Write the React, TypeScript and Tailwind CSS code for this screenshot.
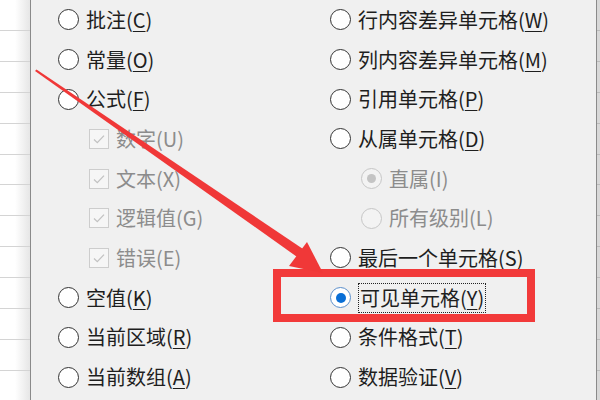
import React from "react";

type Item = {
  label: string;
  key: string;
  kind: "radio" | "check" | "subradio";
  disabled?: boolean;
  checked?: boolean;
  focus?: boolean;
};

const leftItems: Item[] = [
  { label: "批注", key: "C", kind: "radio" },
  { label: "常量", key: "O", kind: "radio" },
  { label: "公式", key: "F", kind: "radio" },
  { label: "数字", key: "U", kind: "check", disabled: true, checked: true },
  { label: "文本", key: "X", kind: "check", disabled: true, checked: true },
  { label: "逻辑值", key: "G", kind: "check", disabled: true, checked: true },
  { label: "错误", key: "E", kind: "check", disabled: true, checked: true },
  { label: "空值", key: "K", kind: "radio" },
  { label: "当前区域", key: "R", kind: "radio" },
  { label: "当前数组", key: "A", kind: "radio" },
];

const rightItems: Item[] = [
  { label: "行内容差异单元格", key: "W", kind: "radio" },
  { label: "列内容差异单元格", key: "M", kind: "radio" },
  { label: "引用单元格", key: "P", kind: "radio" },
  { label: "从属单元格", key: "D", kind: "radio" },
  { label: "直属", key: "I", kind: "subradio", disabled: true, checked: true },
  { label: "所有级别", key: "L", kind: "subradio", disabled: true },
  { label: "最后一个单元格", key: "S", kind: "radio" },
  { label: "可见单元格", key: "Y", kind: "radio", checked: true, focus: true },
  { label: "条件格式", key: "T", kind: "radio" },
  { label: "数据验证", key: "V", kind: "radio" },
];

function Radio({ checked, disabled }: { checked?: boolean; disabled?: boolean }) {
  if (disabled) {
    return (
      <span className="flex h-[21px] w-[21px] shrink-0 items-center justify-center rounded-full border-[1.5px] border-[#c6c6c6] bg-[#f3f3f3]">
        {checked && <span className="h-[9px] w-[9px] rounded-full bg-[#c4c4c4]" />}
      </span>
    );
  }
  if (checked) {
    return (
      <span className="flex h-[21px] w-[21px] shrink-0 items-center justify-center rounded-full border-[1.5px] border-[#5b8fcb] bg-white">
        <span className="h-[10px] w-[10px] rounded-full bg-[#0a6fd6]" />
      </span>
    );
  }
  return (
    <span className="h-[21px] w-[21px] shrink-0 rounded-full border-[1.5px] border-[#333333] bg-white" />
  );
}

function Check() {
  return (
    <span className="flex h-[20px] w-[20px] shrink-0 items-center justify-center border border-[#cdcdcd] bg-[#f6f6f6]">
      <svg width="14" height="14" viewBox="0 0 14 14" fill="none">
        <path d="M2 7.5 L5.3 10.6 L12 3.6" stroke="#c2c2c2" strokeWidth="1.3" />
      </svg>
    </span>
  );
}

function Row({ item }: { item: Item }) {
  const color = item.disabled ? "text-[#8c8c8c]" : "text-[#1e1e1e]";
  const indent = item.kind === "radio" ? "" : "pl-[31px]";
  return (
    <div className={`flex h-[39.7px] items-center ${indent}`}>
      {item.kind === "check" ? (
        <Check />
      ) : (
        <Radio checked={item.checked} disabled={item.disabled} />
      )}
      <span
        className={`ml-[7px] whitespace-nowrap text-[20px] leading-none ${color} ${
          item.focus ? "-ml-[1px] border border-dotted border-[#222] px-[1px] py-[4px]" : ""
        }`}
      >
        {item.label}(
        <span className={item.disabled ? "" : "underline underline-offset-[3px] decoration-1"}>
          {item.key}
        </span>
        )
      </span>
    </div>
  );
}

export default function App() {
  return (
    <div
      className="relative flex h-[400px] w-[600px] overflow-hidden bg-white"
      style={{ fontFamily: '"Noto Sans CJK SC", "Noto Sans", sans-serif' }}
    >
      {/* sheet behind, left */}
      <div className="flex w-[30px] shrink-0 flex-col bg-gradient-to-r from-white via-white to-[#e6e6e6] pt-[30px]">
        {Array.from({ length: 12 }).map((_, i) => (
          <div key={i} className="h-[30.9px] shrink-0 border-t border-[#d4d4d4]" />
        ))}
      </div>

      {/* dialog */}
      <div className="flex-1 border-x border-[#8a8a8a] bg-[#f0f0f0] pl-[27px]">
        <div className="grid grid-cols-[272px_1fr]">
          <div className="flex flex-col">
            {leftItems.map((it) => (
              <Row key={it.key} item={it} />
            ))}
          </div>
          <div className="flex flex-col">
            {rightItems.map((it) => (
              <Row key={it.key} item={it} />
            ))}
          </div>
        </div>
      </div>

      {/* sheet behind, right */}
      <div className="flex w-[3px] shrink-0 flex-col bg-[#d8d8d8] pt-[30px]">
        {Array.from({ length: 12 }).map((_, i) => (
          <div key={i} className="h-[30.9px] shrink-0 border-t border-[#bbbbbb]" />
        ))}
      </div>

      {/* red highlight box */}
      <div className="absolute left-[273px] top-[269px] h-[53px] w-[262px] border-[8px] border-[#f23a3a]" />

      {/* red arrow */}
      <svg className="pointer-events-none absolute left-0 top-0" width="600" height="400" viewBox="0 0 600 400">
        <polygon points="35,71 36.5,69.5 306,251 300,259" fill="#f03838" />
        <polygon points="323,273 289,266 307,242" fill="#f03838" />
      </svg>
    </div>
  );
}
